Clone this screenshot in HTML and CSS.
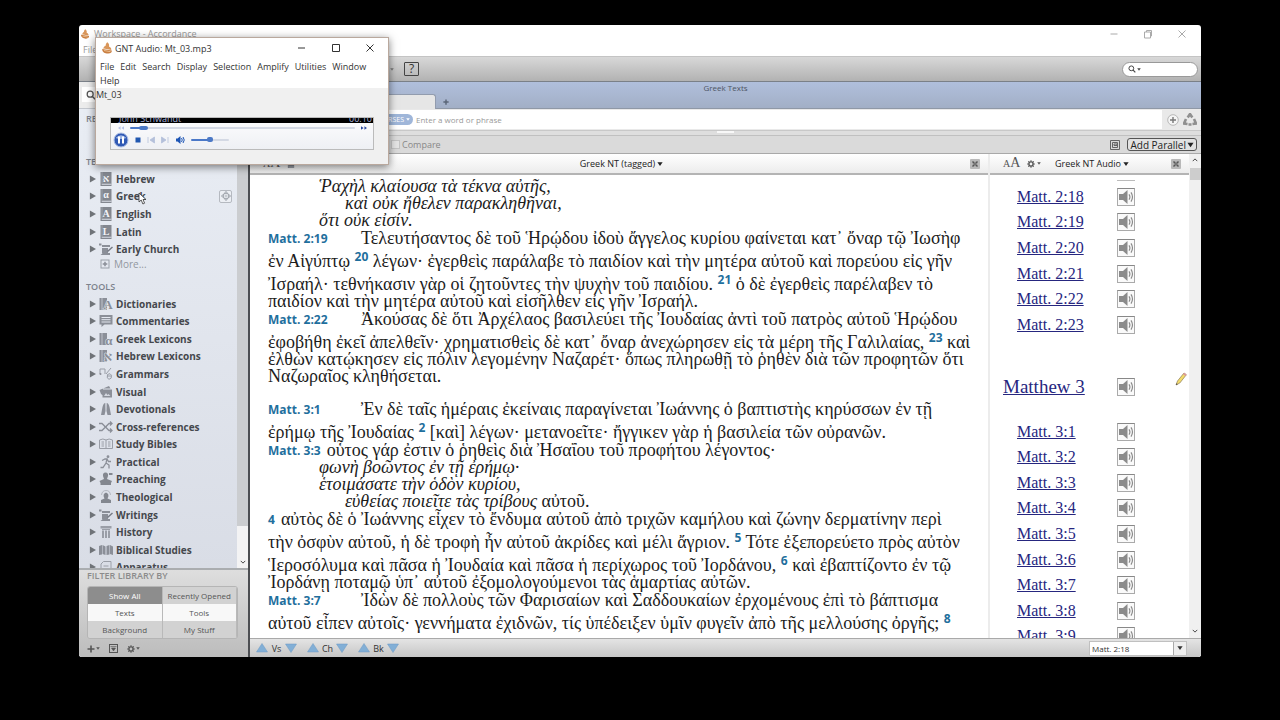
FILE: index.html
```html
<!DOCTYPE html>
<html lang="en">
<head>
<meta charset="utf-8">
<title>Workspace - Accordance</title>
<link rel="stylesheet" href="styles.css">
</head>
<body>
<svg class="defs" aria-hidden="true">
  <symbol id="flame" viewBox="0 0 12 12"><path d="M6.400.3C8 1.700 8.400 3 8 4.400 9.800 5.200 10.600 6.500 10.200 7.900L1.600 6.300C2.800 5.600 3.600 5 3.600 3.800 4.300 4.300 4.700 4 4.700 3.200 4.800 2 5.500 1 6.400.3Z" fill="#d9965a"/><path d="M1.200 7l9.600 1.500c.3 1.800-1.200 3-3.600 3.100C4 11.700 1 10 1.200 7Z" fill="#c97f42"/><path d="M3 8.500l6.500 1.200" stroke="#f3cda0" stroke-width=".8"/></symbol>
  <symbol id="lens" viewBox="0 0 12 12"><circle cx="5" cy="5" r="3.600" fill="none" stroke="currentColor" stroke-width="1.500"/><path d="M7.700 7.700L11 11" stroke="currentColor" stroke-width="1.800"/></symbol>
  <symbol id="gear" viewBox="0 0 10 10"><circle cx="5" cy="5" r="2.600" fill="none" stroke="currentColor" stroke-width="1.700"/><path d="M5 .2v2M5 7.800v2M.2 5h2M7.800 5h2M1.600 1.600L3 3M7 7l1.400 1.400M8.400 1.600L7 3M3 7L1.600 8.400" stroke="currentColor" stroke-width="1.400"/></symbol>
  <symbol id="speaker" viewBox="0 0 16 16"><path d="M1 5h4l4.500-4v14L5 11H1Z" fill="#8b8b8b"/><path d="M11 5.400q1.800 2.600 0 5.200M13 3.400q3 4.600 0 9.200" fill="none" stroke="#8b8b8b" stroke-width="1.200"/></symbol>
  <symbol id="tri" viewBox="0 0 8 8"><path d="M1 0l7 4-7 4Z" fill="#6f7378"/></symbol>
  <symbol id="up" viewBox="0 0 12 10"><path d="M6 .5L11.500 9H.5Z" fill="#82afd6" stroke="#6c9ac5" stroke-width=".5"/></symbol>
  <symbol id="down" viewBox="0 0 12 10"><path d="M6 9.500L11.500 1H.5Z" fill="#82afd6" stroke="#6c9ac5" stroke-width=".5"/></symbol>
  <symbol id="caret" viewBox="0 0 8 6"><path d="M.5.500h7L4 5.700Z" fill="currentColor"/></symbol>
  <symbol id="close" viewBox="0 0 10 10"><rect width="10" height="10" rx="1" fill="#b9b9b9"/><path d="M2.500 2.500l5 5M7.500 2.500l-5 5" stroke="#555" stroke-width="1.500"/><path d="M5 2.500v5M2.500 5h5" stroke="#888" stroke-width=".8"/></symbol>
  <symbol id="scroll" viewBox="0 0 14 14"><path d="M0 1.500h2.500v2H0ZM3 3h8v2H3ZM3 6h6v5.500H3Z" fill="#8b8f98"/><path d="M1.500 13h9.500v-2H4" fill="#8b8f98"/><path d="M8.500 9.500L13.500 5" stroke="#777b84" stroke-width="1.500"/></symbol>
  <symbol id="book" viewBox="0 0 14 14"><path d="M1.500 0h11v14h-11Z" fill="#83878f"/><path d="M2.700 11.700h9.800v1H2.700Z" fill="#d9dde6"/><path d="M3 0v11.500" stroke="#a8acb5" stroke-width=".7"/></symbol>
  <symbol id="books" viewBox="0 0 14 14"><path d="M.5 1h2.200v12H.5ZM3.300 1H8v12H3.300Z" fill="#8b8f98"/></symbol>
  <symbol id="move" viewBox="0 0 12 12"><path d="M6 .5l2.200 2.700H3.800ZM6 11.500l2.200-2.700H3.800ZM.5 6l2.700-2.200v4.400ZM11.500 6L8.800 3.800v4.400Z" fill="#dfe3e9" stroke="#8f959d" stroke-width="1"/><circle cx="6" cy="6" r="1" fill="#9aa0a8"/></symbol>
</svg>
<main class="window">
  <header class="titlebar">
    <div class="title"><svg class="i10"><use href="#flame"/></svg>Workspace - Accordance</div>
    <div class="wincontrols">
      <button aria-label="Minimize"><svg class="i10" viewBox="0 0 10 10"><path d="M1.500 5h7" stroke="#aaa"/></svg></button>
      <button aria-label="Restore"><svg class="i10" viewBox="0 0 10 10"><path d="M1.500 3h6v6h-6ZM3.500 3V1.500h5v5.500H7.500" fill="none" stroke="#aaa"/></svg></button>
      <button aria-label="Close"><svg class="i10" viewBox="0 0 10 10"><path d="M1.500 1.500l7 7M8.500 1.500l-7 7" stroke="#aaa"/></svg></button>
    </div>
    <div class="filemenu">File</div>
  </header>
  <div class="toolbar">
    <div class="toolleft"><svg class="i4 dim"><use href="#caret"/></svg><button class="help">?</button></div>
    <label class="pill"><svg class="i8"><use href="#lens"/></svg><svg class="i4"><use href="#caret"/></svg><input aria-label="Search all"></label>
  </div>
  <div class="body">
    <aside class="sidebar">
      <div class="sidesearch"><label><svg class="i10"><use href="#lens"/></svg><input aria-label="Search library"></label></div>
      <div class="library">
        <div class="tree">
          <h2 class="recent">RECENT</h2>
          <h2>TEXTS</h2>
          <ul class="texts">
            <li><svg class="i8"><use href="#tri"/></svg><svg class="i14"><use href="#book"/><text x="7" y="9.500">א</text></svg>Hebrew</li>
            <li class="greek"><svg class="i8"><use href="#tri"/></svg><svg class="i14"><use href="#book"/><text x="7" y="8.500">α</text></svg>Greek
              <button class="drag" aria-label="Move"><svg class="i10"><use href="#move"/></svg></button>
              <svg class="cursor" viewBox="0 0 9 13"><path d="M1 1v9l2.200-2 1.700 4 1.700-.8L5 7.500h3Z" fill="#fff" stroke="#333" stroke-width=".8"/></svg></li>
            <li><svg class="i8"><use href="#tri"/></svg><svg class="i14"><use href="#book"/><text x="7" y="9.500">A</text></svg>English</li>
            <li><svg class="i8"><use href="#tri"/></svg><svg class="i14"><use href="#book"/><text x="7" y="9.500">L</text></svg>Latin</li>
            <li><svg class="i8"><use href="#tri"/></svg><svg class="i14"><use href="#scroll"/></svg>Early Church</li>
          </ul>
          <div class="more"><svg class="i10" viewBox="0 0 10 10"><rect x="1" y="1" width="8" height="8" fill="none" stroke="#999fa8"/><path d="M5 2.700v4.600M2.700 5h4.600" stroke="#8b8f98" stroke-width="1.500"/></svg>More...</div>
          <h2 class="tools">TOOLS</h2>
          <ul class="toollist">
            <li><svg class="i8"><use href="#tri"/></svg><svg class="i14"><use href="#books"/><text class="dark" x="9" y="12">A</text></svg>Dictionaries</li>
            <li><svg class="i8"><use href="#tri"/></svg><svg class="i14" viewBox="0 0 14 14"><path d="M.5 1h13v9.500H5.500L2.500 13v-2.500h-2Z" fill="#8b8f98"/><path d="M2.500 3.500h9M2.500 5.700h9M2.500 8h9" stroke="#e4e8f0"/></svg>Commentaries</li>
            <li><svg class="i8"><use href="#tri"/></svg><svg class="i14"><use href="#books"/><text class="dark" x="10" y="13">α</text></svg>Greek Lexicons</li>
            <li><svg class="i8"><use href="#tri"/></svg><svg class="i14"><use href="#books"/><text class="dark" x="9" y="12">א</text></svg>Hebrew Lexicons</li>
            <li><svg class="i8"><use href="#tri"/></svg><svg class="i14" viewBox="0 0 14 14"><path d="M1 7V2h5v5M7 7l5-6M8.500 7.500q3-2 4 .8.500 3.700-2.500 4-2.700-.5-1.500-4.800ZM8 9h4.500" fill="none" stroke="#9a9ea7"/><circle cx="1.500" cy="7" r="1" fill="#8b8f98"/></svg>Grammars</li>
            <li><svg class="i8"><use href="#tri"/></svg><svg class="i14" viewBox="0 0 14 14"><path d="M.5 5l9.500-4 1.500 2.500H4v7L2 9ZM3.500 4.500H13v8H3.500Z" fill="#8b8f98"/><path d="M5 11l2-3 1.500 2 1-1 2 2Z" fill="#d4d8e0"/></svg>Visual</li>
            <li><svg class="i8"><use href="#tri"/></svg><svg class="i14" viewBox="0 0 14 14"><path d="M6.300 1Q4.500 1 3.500 5L2 13h3.500l1-4ZM7.700 1q1.800 0 2.800 4L12 13H8.500l-1-4Z" fill="#8b8f98"/></svg>Devotionals</li>
            <li><svg class="i8"><use href="#tri"/></svg><svg class="i14" viewBox="0 0 14 14"><path d="M0 3.500h3l7 7h3M0 10.500h3l7-7h3M11 1.500l2 2-2 2M11 8.500l2 2-2 2" fill="none" stroke="#8b8f98" stroke-width="1.300"/></svg>Cross-references</li>
            <li><svg class="i8"><use href="#tri"/></svg><svg class="i14" viewBox="0 0 14 14"><path d="M.5 3Q4 1 7 3q3-2 6.500 0v8.500H.5ZM7 3v9M2.500 5h2.500M9 5h2.500M2.500 7h2.500M9 7h2.500M2.500 9h2.500M9 9h2.500" fill="none" stroke="#9a9ea7"/></svg>Study Bibles</li>
            <li><svg class="i8"><use href="#tri"/></svg><svg class="i14" viewBox="0 0 14 14"><circle cx="9" cy="1.700" r="1.400" fill="#8b8f98"/><path d="M3 5.500l3-1.500h2l-1 4L4 12.500H1.500M7 8l3 2v3.500M8 4l1.500 2.500H12" fill="none" stroke="#8b8f98" stroke-width="1.300"/></svg>Practical</li>
            <li><svg class="i8"><use href="#tri"/></svg><svg class="i14" viewBox="0 0 14 14"><path d="M6.500.5q3 0 2.500 3.500L8 7l5 2-1 2v2H1.500v-2L.5 9l4.500-2L4 4Q3.500.5 6.500.5ZM10 1h3.500v2H10Z" fill="#83878f"/></svg>Preaching</li>
            <li><svg class="i8"><use href="#tri"/></svg><svg class="i14" viewBox="0 0 14 14"><path d="M2.500 5Q3 .5 7 .5t4.500 4.500" fill="none" stroke="#b4b8c0"/><path d="M7 2.500q4 1.500 1.500 6L12 10v3H2v-3l3.500-1.500Q3 4 7 2.500Z" fill="#83878f"/></svg>Theological</li>
            <li><svg class="i8"><use href="#tri"/></svg><svg class="i14"><use href="#scroll"/></svg>Writings</li>
            <li><svg class="i8"><use href="#tri"/></svg><svg class="i14" viewBox="0 0 14 14"><path d="M1.500 1h11v2.500h-11ZM3 4h8v1H3ZM3 5.500h2V13H3ZM6 5.500h2V13H6ZM9 5.500h2V13H9Z" fill="#9a9ea7"/></svg>History</li>
            <li><svg class="i8"><use href="#tri"/></svg><svg class="i14" viewBox="0 0 14 14"><path d="M0 3l3-1v9.500L0 12ZM3.500 2l3 1.500v8.500l-3-1ZM7.500 3l3-1v9.500l-3 .5ZM11 2l3 1.500V12l-3-1Z" fill="#8b8f98"/></svg>Biblical Studies</li>
            <li><svg class="i8"><use href="#tri"/></svg><svg class="i14" viewBox="0 0 14 14"><path d="M4.500 1.500H12v11H2V4ZM4.500 6h5M4.500 8.500h5" fill="none" stroke="#9a9ea7"/></svg>Apparatus</li>
          </ul>
        </div>
        <div class="sidescroll"><div class="thumb"></div><svg class="i6" viewBox="0 0 8 8"><path d="M1 2.500l3 3 3-3" fill="none" stroke="#444" stroke-width="1.300"/></svg></div>
      </div>
      <footer class="filter">
        <h2>FILTER LIBRARY BY</h2>
        <div class="filters">
          <button class="on">Show All</button><button>Recently Opened</button>
          <button class="lit">Texts</button><button class="lit">Tools</button>
          <button>Background</button><button>My Stuff</button>
        </div>
        <div class="actions">
          <button aria-label="Add"><svg class="i8" viewBox="0 0 8 8"><path d="M4 .5v7M.5 4h7" stroke="#555" stroke-width="1.600"/></svg><svg class="i4"><use href="#caret"/></svg></button>
          <button aria-label="Show"><svg class="i9" viewBox="0 0 9 9"><rect x=".5" y=".5" width="8" height="8" fill="none" stroke="#555"/><path d="M1.500 2.500h6M2.500 4h4L4.500 7Z" fill="#555" stroke="#555" stroke-width=".6"/></svg></button>
          <button aria-label="Options"><svg class="i8"><use href="#gear"/></svg><svg class="i4"><use href="#caret"/></svg></button>
        </div>
      </footer>
    </aside>
    <section class="work">
      <div class="tabs"><div class="caption">Greek Texts</div><div class="tabrow"><div class="tab"></div><button aria-label="New tab"><svg class="i6" viewBox="0 0 8 8"><path d="M4 .5v7M.5 4h7" stroke="#5b6678" stroke-width="2"/></svg></button></div></div>
      <div class="query">
        <div class="field"><button class="verses">VERSES <svg class="i4"><use href="#caret"/></svg></button><input aria-label="Search text" placeholder="Enter a word or phrase"></div>
        <button aria-label="Add row"><svg class="i12" viewBox="0 0 12 12"><circle cx="6" cy="6" r="5.300" fill="#f5f5f5" stroke="#aaa" stroke-width=".8"/><path d="M6 3v6M3 6h6" stroke="#777" stroke-width="1.400"/></svg></button>
        <button aria-label="Recycle"><svg class="i14" viewBox="0 0 14 14"><path d="M4.700 4.500L7 1l2.300 3.500M11 6l2 4.500-3.500.5M3 6l-2 4.500 3.500.5M5.500 11.500h3" fill="none" stroke="#909090" stroke-width="2.600"/></svg></button>
      </div>
      <div class="splitter"><i></i></div>
      <div class="compare">
        <label><input type="checkbox">Compare</label>
        <span class="push"></span>
        <svg class="i10" viewBox="0 0 10 10"><path d="M.5.500h9v9h-9ZM2.500 2.500h5v5h-5ZM4 4h3v1.500H4Z" fill="none" stroke="#666"/></svg>
        <button class="parallel">Add Parallel<svg class="i7"><use href="#caret"/></svg></button>
      </div>
      <div class="panes">
        <article class="pane">
          <header class="panehead"><div class="tune"><span class="aa"><small>A</small>A</span><svg class="i8"><use href="#book"/></svg><svg class="i4"><use href="#caret"/></svg></div><h1>Greek NT (tagged)<svg class="i6"><use href="#caret"/></svg></h1><button class="x" aria-label="Close Greek NT"><svg class="i10"><use href="#close"/></svg></button></header>
          <div class="scripture" lang="grc">
            <p class="q">Ῥαχὴλ κλαίουσα τὰ τέκνα αὐτῆς,</p>
            <p class="q deep">καὶ οὐκ ἤθελεν παρακληθῆναι,</p>
            <p class="q">ὅτι οὐκ εἰσίν.</p>
            <p class="v"><b>Matt. 2:19</b>Τελευτήσαντος δὲ τοῦ Ἡρῴδου ἰδοὺ ἄγγελος κυρίου φαίνεται κατ᾽ ὄναρ τῷ Ἰωσὴφ</p>
            <p class="s">ἐν Αἰγύπτῳ <sup>20</sup> λέγων· ἐγερθεὶς παράλαβε τὸ παιδίον καὶ τὴν μητέρα αὐτοῦ καὶ πορεύου εἰς γῆν</p>
            <p class="s">Ἰσραήλ· τεθνήκασιν γὰρ οἱ ζητοῦντες τὴν ψυχὴν τοῦ παιδίου. <sup>21</sup> ὁ δὲ ἐγερθεὶς παρέλαβεν τὸ</p>
            <p>παιδίον καὶ τὴν μητέρα αὐτοῦ καὶ εἰσῆλθεν εἰς γῆν Ἰσραήλ.</p>
            <p class="v"><b>Matt. 2:22</b>Ἀκούσας δὲ ὅτι Ἀρχέλαος βασιλεύει τῆς Ἰουδαίας ἀντὶ τοῦ πατρὸς αὐτοῦ Ἡρῴδου</p>
            <p class="s">ἐφοβήθη ἐκεῖ ἀπελθεῖν· χρηματισθεὶς δὲ κατ᾽ ὄναρ ἀνεχώρησεν εἰς τὰ μέρη τῆς Γαλιλαίας, <sup>23</sup> καὶ</p>
            <p>ἐλθὼν κατῴκησεν εἰς πόλιν λεγομένην Ναζαρέτ· ὅπως πληρωθῇ τὸ ῥηθὲν διὰ τῶν προφητῶν ὅτι</p>
            <p>Ναζωραῖος κληθήσεται.</p>
            <p class="v chapter"><b>Matt. 3:1</b>Ἐν δὲ ταῖς ἡμέραις ἐκείναις παραγίνεται Ἰωάννης ὁ βαπτιστὴς κηρύσσων ἐν τῇ</p>
            <p class="s">ἐρήμῳ τῆς Ἰουδαίας <sup>2</sup> [καὶ] λέγων· μετανοεῖτε· ἤγγικεν γὰρ ἡ βασιλεία τῶν οὐρανῶν.</p>
            <p class="v tight"><b>Matt. 3:3</b>οὗτος γάρ ἐστιν ὁ ῥηθεὶς διὰ Ἠσαΐου τοῦ προφήτου λέγοντος·</p>
            <p class="q">φωνὴ βοῶντος ἐν τῇ ἐρήμῳ·</p>
            <p class="q">ἑτοιμάσατε τὴν ὁδὸν κυρίου,</p>
            <p class="q deep">εὐθείας ποιεῖτε τὰς τρίβους <span>αὐτοῦ.</span></p>
            <p class="v tight"><b>4</b>αὐτὸς δὲ ὁ Ἰωάννης εἶχεν τὸ ἔνδυμα αὐτοῦ ἀπὸ τριχῶν καμήλου καὶ ζώνην δερματίνην περὶ</p>
            <p class="s">τὴν ὀσφὺν αὐτοῦ, ἡ δὲ τροφὴ ἦν αὐτοῦ ἀκρίδες καὶ μέλι ἄγριον. <sup>5</sup> Τότε ἐξεπορεύετο πρὸς αὐτὸν</p>
            <p class="s">Ἱεροσόλυμα καὶ πᾶσα ἡ Ἰουδαία καὶ πᾶσα ἡ περίχωρος τοῦ Ἰορδάνου, <sup>6</sup> καὶ ἐβαπτίζοντο ἐν τῷ</p>
            <p>Ἰορδάνῃ ποταμῷ ὑπ᾽ αὐτοῦ ἐξομολογούμενοι τὰς ἁμαρτίας αὐτῶν.</p>
            <p class="v"><b>Matt. 3:7</b>Ἰδὼν δὲ πολλοὺς τῶν Φαρισαίων καὶ Σαδδουκαίων ἐρχομένους ἐπὶ τὸ βάπτισμα</p>
            <p class="s">αὐτοῦ εἶπεν αὐτοῖς· γεννήματα ἐχιδνῶν, τίς ὑπέδειξεν ὑμῖν φυγεῖν ἀπὸ τῆς μελλούσης ὀργῆς; <sup>8</sup></p>
          </div>
        </article>
        <article class="audio">
          <header class="panehead"><div class="tune"><span class="aa"><small>A</small>A</span><svg class="i8"><use href="#gear"/></svg><svg class="i4"><use href="#caret"/></svg></div><h1>Greek NT Audio<svg class="i6"><use href="#caret"/></svg></h1><button class="x" aria-label="Close Greek NT Audio"><svg class="i10"><use href="#close"/></svg></button></header>
          <div class="tracks">
            <div class="sliver"></div>
            <ul class="six">
              <li><a href="#">Matt. 2:18</a><button aria-label="Play 2:18"><svg><use href="#speaker"/></svg></button></li>
              <li><a href="#">Matt. 2:19</a><button aria-label="Play 2:19"><svg><use href="#speaker"/></svg></button></li>
              <li><a href="#">Matt. 2:20</a><button aria-label="Play 2:20"><svg><use href="#speaker"/></svg></button></li>
              <li><a href="#">Matt. 2:21</a><button aria-label="Play 2:21"><svg><use href="#speaker"/></svg></button></li>
              <li><a href="#">Matt. 2:22</a><button aria-label="Play 2:22"><svg><use href="#speaker"/></svg></button></li>
              <li><a href="#">Matt. 2:23</a><button aria-label="Play 2:23"><svg><use href="#speaker"/></svg></button></li>
            </ul>
            <div class="book"><a href="#">Matthew 3</a><button aria-label="Play Matthew 3"><svg><use href="#speaker"/></svg></button></div>
            <ul class="nine">
              <li><a href="#">Matt. 3:1</a><button aria-label="Play 3:1"><svg><use href="#speaker"/></svg></button></li>
              <li><a href="#">Matt. 3:2</a><button aria-label="Play 3:2"><svg><use href="#speaker"/></svg></button></li>
              <li><a href="#">Matt. 3:3</a><button aria-label="Play 3:3"><svg><use href="#speaker"/></svg></button></li>
              <li><a href="#">Matt. 3:4</a><button aria-label="Play 3:4"><svg><use href="#speaker"/></svg></button></li>
              <li><a href="#">Matt. 3:5</a><button aria-label="Play 3:5"><svg><use href="#speaker"/></svg></button></li>
              <li><a href="#">Matt. 3:6</a><button aria-label="Play 3:6"><svg><use href="#speaker"/></svg></button></li>
              <li><a href="#">Matt. 3:7</a><button aria-label="Play 3:7"><svg><use href="#speaker"/></svg></button></li>
              <li><a href="#">Matt. 3:8</a><button aria-label="Play 3:8"><svg><use href="#speaker"/></svg></button></li>
              <li><a href="#">Matt. 3:9</a><button aria-label="Play 3:9"><svg><use href="#speaker"/></svg></button></li>
            </ul>
            <svg class="pencil" viewBox="0 0 12 14"><path d="M1 13l1.500-4L9 1l2.300 1.800L4.800 11Z" fill="#f3dc6a" stroke="#8d7a55" stroke-width=".7"/><path d="M8 2.200L9.300.7l2.300 1.800-1.300 1.600Z" fill="#dc9a9a"/><path d="M1 13l.6-1.800 1.200 1Z" fill="#444"/></svg>
          </div>
        </article>
        <div class="vscroll"><svg class="i6" viewBox="0 0 8 8"><path d="M1 5.500l3-3 3 3" fill="none" stroke="#444" stroke-width="1.300"/></svg><div class="thumb"></div><svg class="i6 end" viewBox="0 0 8 8"><path d="M1 2.500l3 3 3-3" fill="none" stroke="#444" stroke-width="1.300"/></svg></div>
      </div>
      <footer class="status">
        <span class="nav"><button aria-label="Previous verse"><svg><use href="#up"/></svg></button>Vs<button aria-label="Next verse"><svg><use href="#down"/></svg></button></span>
        <span class="nav"><button aria-label="Previous chapter"><svg><use href="#up"/></svg></button>Ch<button aria-label="Next chapter"><svg><use href="#down"/></svg></button></span>
        <span class="nav"><button aria-label="Previous book"><svg><use href="#up"/></svg></button>Bk<button aria-label="Next book"><svg><use href="#down"/></svg></button></span>
        <span class="push"></span>
        <div class="combo"><input aria-label="Reference" value="Matt. 2:18"><button aria-label="Open list"><svg class="i6"><use href="#caret"/></svg></button></div>
      </footer>
    </section>
  </div>
  <section class="dialog" aria-label="GNT Audio">
    <header><svg class="i12"><use href="#flame"/></svg><span>GNT Audio: Mt_03.mp3</span>
      <div class="dlgcontrols">
        <button aria-label="Minimize"><svg class="i10" viewBox="0 0 10 10"><path d="M1 5h7" stroke="#333"/></svg></button>
        <button aria-label="Maximize"><svg class="i10" viewBox="0 0 10 10"><path d="M1.500 1.500h7v7h-7Z" fill="none" stroke="#333"/></svg></button>
        <button aria-label="Close"><svg class="i10" viewBox="0 0 10 10"><path d="M1.500 1.500l7 7M8.500 1.500l-7 7" stroke="#333"/></svg></button>
      </div>
    </header>
    <nav><span>File</span><span>Edit</span><span>Search</span><span>Display</span><span>Selection</span><span>Amplify</span><span>Utilities</span><span>Window</span><span>Help</span></nav>
    <div class="dlgbody">
      <div class="track">Mt_03</div>
      <div class="player">
        <div class="marquee"><span>John Schwandt</span><span>00:10</span></div>
        <div class="seek"><svg viewBox="0 0 7 4"><path d="M3 0v4L0 2ZM7 0v4L4 2Z" fill="#b7c3e6"/></svg><input type="range" aria-label="Position" min="0" max="100" value="4"><svg viewBox="0 0 7 4"><path d="M0 0v4l3-2ZM4 0v4l3-2Z" fill="#2a4aa0"/></svg></div>
        <div class="transport">
          <button aria-label="Pause"><svg class="i16" viewBox="0 0 16 16"><circle cx="8" cy="8" r="7" fill="#3059b4" stroke="#aebfe4"/><path d="M2.500 6Q8 .5 13.500 6 8 8 2.500 6Z" fill="#9eb6e6"/><path d="M6 4.500v7M10 4.500v7" stroke="#fff" stroke-width="2"/></svg></button>
          <button aria-label="Stop"><svg class="i6" viewBox="0 0 6 6"><path d="M.5.500h5v5h-5Z" fill="#2057b0"/></svg></button>
          <button aria-label="Previous"><svg class="i8" viewBox="0 0 8 8"><path d="M1 1v6M7.500 1v6L3 4Z" fill="#b4c0da" stroke="#b4c0da" stroke-width=".8"/></svg></button>
          <button aria-label="Next"><svg class="i8" viewBox="0 0 8 8"><path d="M7 1v6M.5 1v6L5 4Z" fill="#b4c0da" stroke="#b4c0da" stroke-width=".8"/></svg></button>
          <button aria-label="Mute"><svg class="i10" viewBox="0 0 10 10"><path d="M1 3.500h1.500L5.500 1v8L2.500 6.500H1Z" fill="#1d55b5"/><path d="M6.500 3q1.500 2 0 4M8 2q2.500 3 0 6" fill="none" stroke="#1d55b5"/></svg></button>
          <input type="range" aria-label="Volume" min="0" max="100" value="50">
        </div>
      </div>
    </div>
  </section>
</main>
</body>
</html>
```

FILE: styles.css
```css
* { box-sizing: border-box; }
body { margin: 0; height: 100vh; padding: 25px 79px 63px; background: #000; font: 9px "Open Sans", "Noto Sans", sans-serif; color: #333; }
button, input { font: inherit; color: inherit; margin: 0; padding: 0; border: 0; background: none; min-width: 0; outline: 0; }
button { display: inline-flex; align-items: center; justify-content: center; }
h1, h2, p, ul { margin: 0; padding: 0; font-weight: 400; font-size: inherit; list-style: none; }
svg { flex: none; display: block; }
.defs { position: absolute; width: 0; height: 0; }
.i4 { width: 4px; height: 3px; }
.i6 { width: 6px; height: 6px; }
.i7 { width: 7px; height: 6px; }
.i8 { width: 8px; height: 8px; }
.i9 { width: 9px; height: 9px; }
.i10 { width: 10px; height: 10px; }
.i12 { width: 12px; height: 12px; }
.i14 { width: 14px; height: 14px; }
.i16 { width: 16px; height: 16px; }
.push { flex: 1; }

.window { position: relative; height: 100%; display: flex; flex-direction: column; background: #fff; border-radius: 3px; overflow: hidden; }
.titlebar { flex: none; height: 31px; display: grid; grid-template-columns: 1fr auto; grid-template-rows: 17px 14px; align-items: center; color: #999; padding-left: 1px; }
.title { display: flex; align-items: center; gap: 4px; }
.filemenu { padding-left: 3px; }
.wincontrols { display: flex; gap: 24px; padding-right: 14px; }
.toolbar { flex: none; height: 26px; display: flex; align-items: center; justify-content: space-between; padding: 0 3px 0 311px; background: linear-gradient(#d8d8d8, #b2b2b2); border-top: 1px solid #c4c4c4; border-bottom: 1px solid #7a8088; }
.toolleft { display: flex; align-items: center; gap: 10px; }
.dim { color: #777; }
.help { width: 15px; height: 14px; border: 1px solid #444; border-radius: 1px; font-size: 12px; line-height: 12px; }
.pill { display: flex; align-items: center; gap: 1px; width: 76px; height: 15px; padding: 0 5px; border: 1px solid #999; border-radius: 8px; background: #fff; color: #444; }
.pill input { width: 40px; }

.body { flex: 1; min-height: 0; display: flex; }
.sidebar { flex: none; width: 171px; display: flex; flex-direction: column; border-right: 2px solid #4c4e52; background: #e4e8f0; }
.sidesearch { flex: none; height: 27px; padding: 5px 3px; background: #ececec; border-bottom: 1px solid #c3c7ce; }
.sidesearch label { display: flex; height: 15px; align-items: center; padding-left: 4px; background: #fff; color: #555; }
.library { flex: 1; min-height: 0; display: flex; overflow: hidden; background: linear-gradient(#e9edf4, #d9dde6); }
.tree { flex: 1; min-width: 0; padding-left: 7px; font-size: 10px; color: #45484d; }
.sidebar h2 { font-size: 9px; font-weight: 600; line-height: 12px; color: #7c828c; }
.tree .recent { margin: 4px 0 31px; }
.texts { display: grid; grid-auto-rows: 1fr; height: 88px; margin-top: 2px; }
.toollist { display: grid; grid-auto-rows: 1fr; height: 281px; margin-top: 2px; }
.tree li { display: flex; align-items: center; gap: 3px; white-space: nowrap; font-weight: 700; line-height: 16px; position: relative; padding-left: 3px; }
.tree li > .i8 { width: 7px; }
.tree svg text { font: 700 10px "Liberation Serif", "DejaVu Serif", serif; fill: #f2f4f8; text-anchor: middle; }
.tree svg .dark { fill: #8b8f98; font-size: 13px; stroke: #e4e8f0; stroke-width: 1px; paint-order: stroke; }
.drag { width: 13px; height: 13px; margin-left: auto; margin-right: 5px; border: 1px solid #b5b9c0; border-radius: 2px; background: #eceff4; }
.cursor { position: absolute; left: 52px; top: 4px; width: 9px; height: 13px; }
.more { display: flex; align-items: center; gap: 4px; height: 12px; padding-left: 14px; font-size: 10px; color: #9297a0; }
.tree .tools { margin-top: 11px; }
.sidescroll { width: 11px; background: #f3f3f4; display: flex; flex-direction: column; align-items: center; justify-content: space-between; padding-bottom: 3px; }
.sidescroll .thumb { width: 11px; height: 417px; background: #cbcdd0; }
.filter { flex: none; height: 89px; padding: 0 10px 0 8px; border-top: 2px solid #aaadb0; background: linear-gradient(#dedede, #bcbcbc); }
.sidebar .filter h2 { color: #8b8b8b; }
.filters { display: grid; grid-template-columns: 1fr 1fr; grid-auto-rows: 17px; margin-top: 4px; border: 1px solid #b5b5b5; border-radius: 3px; overflow: hidden; color: #555; font-size: 8px; }
.filters button { background: #d2d2d2; border-right: 1px solid #b9b9b9; white-space: nowrap; }
.filters .on { background: #8d8d8d; color: #fff; }
.filters .lit { background: #f8f8f8; }
.actions { display: flex; align-items: center; gap: 9px; padding: 5px 0 0; color: #555; }
.actions button { gap: 1px; }

.work { flex: 1; min-width: 0; display: flex; flex-direction: column; background: #fff; }
.tabs { flex: none; height: 27px; background: linear-gradient(#b0bfdc, #a2afc6); border-bottom: 1px solid #8f98a6; display: flex; flex-direction: column; justify-content: space-between; }
.caption { text-align: center; font-size: 8px; line-height: 12px; color: #4d5564; }
.tabrow { display: flex; align-items: center; gap: 7px; height: 15px; }
.tab { width: 186px; height: 15px; background: #e6e6e6; border: 1px solid #929cae; border-bottom: 0; border-radius: 3px 3px 0 0; }
.query { flex: none; display: flex; align-items: center; gap: 3px; height: 21px; padding-right: 4px; background: #e9e9e9; }
.query > button { width: 14px; }
.field { flex: 1; height: 19px; margin-right: 1px; display: flex; align-items: center; gap: 3px; padding-left: 122px; background: #fff; }
.field input { flex: 1; font-size: 8px; }
.field input::placeholder { color: #999; opacity: 1; }
.verses { width: 41px; height: 11px; gap: 2px; border-radius: 6px; background: #9fb6d9; color: #fff; font-size: 7px; line-height: 11px; justify-content: flex-end; padding-right: 3px; }
.splitter { flex: none; height: 5px; background: #dedede; border-top: 1px solid #c8c8c8; display: flex; justify-content: center; }
.splitter i { width: 17px; height: 2px; background: #f8f8f8; }
.compare { flex: none; height: 19px; display: flex; align-items: center; gap: 7px; padding: 0 4px 0 141px; background: #dadada; border-top: 1px solid #c0c0c0; border-bottom: 1px solid #a9a9a9; color: #888; }
.compare label { display: flex; align-items: center; gap: 2px; }
.compare input { appearance: none; width: 9px; height: 9px; border: 1px solid #c4c4c4; background: #e4e4e4; }
.parallel { height: 13px; gap: 1px; padding: 0 2px; border: 1px solid #555; border-radius: 3px; background: #e2e2e2; color: #222; font-size: 10px; white-space: nowrap; }

.panes { flex: 1; min-height: 0; display: flex; }
.pane { flex: 1; min-width: 0; display: flex; flex-direction: column; overflow: hidden; }
.audio { flex: none; width: 201px; border-left: 2px solid #ececec; display: flex; flex-direction: column; overflow: hidden; }
.panehead { flex: none; height: 21px; display: grid; grid-template-columns: 1fr auto 1fr; align-items: center; padding: 0 8px 0 13px; background: linear-gradient(#fff, #ececec); border-bottom: 2px solid #b4b4b4; color: #555; }
.tune { display: flex; align-items: center; gap: 2px; }
.panehead h1 { display: flex; align-items: center; gap: 2px; color: #222; }
.x { justify-self: end; }
.aa { font: 14px "Liberation Serif", serif; margin-right: 5px; line-height: 16px; }
.aa small { font-size: 10px; }
.scripture { flex: 1; min-height: 0; overflow: hidden; padding: 3px 0 0 18px; font-family: "Liberation Serif", "DejaVu Serif", serif; font-size: 18px; color: #1c1c1c; white-space: nowrap; }
.scripture p { line-height: 17px; }
.scripture .q { padding-left: 51px; font-style: italic; }
.scripture .deep { padding-left: 77px; }
.scripture .q span { font-style: normal; }
.scripture .v { line-height: 18px; }
.scripture .s { padding-top: 5px; line-height: 18px; }
.scripture .chapter { margin-top: 15px; }
.scripture b, .scripture sup { font-family: "Open Sans", sans-serif; font-size: 12px; font-weight: 700; color: #1f6f9d; line-height: 12px; }
.scripture sup { vertical-align: 6px; line-height: 0; }
.scripture b { display: inline-block; min-width: 93px; vertical-align: 1px; }
.scripture .tight b { min-width: 0; margin-right: 6px; }

.tracks { flex: 1; min-height: 0; position: relative; overflow: hidden; font-family: "Liberation Serif", serif; font-size: 16px; }
.tracks li, .book { display: grid; grid-template-columns: 100px 18px; align-items: center; padding-left: 27px; }
.tracks a { color: #26267f; }
.tracks button { width: 18px; height: 18px; border: 1px solid #aaa; border-top-color: #888; background: #fafafa; }
.tracks button svg { width: 16px; height: 16px; }
.sliver { width: 18px; height: 6px; margin-left: 127px; border-bottom: 1px solid #bbb; }
.tracks ul { display: grid; grid-auto-rows: 1fr; }
.six { height: 154px; margin-top: 3px; }
.nine { height: 230px; margin-top: 12px; }
.book { height: 41px; margin-top: 28px; padding-left: 13px; grid-template-columns: 114px 18px; font-size: 19px; }
.pencil { position: absolute; right: 2px; top: 197px; width: 12px; height: 14px; }
.vscroll { flex: none; width: 12px; display: flex; flex-direction: column; align-items: center; gap: 5px; padding: 3px 0 4px; background: #f0f0f0; }
.vscroll .thumb { width: 11px; height: 12px; background: #cdcdcd; }
.vscroll .end { margin-top: auto; }

.status { flex: none; height: 19px; display: flex; align-items: center; gap: 10px; padding: 0 14px 0 6px; background: linear-gradient(#e4e4e4, #c6c6c6); border-top: 1px solid #a9a9a9; }
.nav { display: flex; align-items: center; justify-content: space-between; width: 41px; }
.nav svg { width: 12px; height: 10px; }
.combo { display: flex; width: 98px; height: 15px; background: #fff; border: 1px solid #c0c0c0; }
.combo input { flex: 1; padding-left: 2px; font-size: 8px; }
.combo button { width: 13px; border-left: 1px solid #aaa; background: #eee; }

.dialog { position: absolute; left: 16px; top: 12px; width: 294px; height: 128px; display: flex; flex-direction: column; background: #fff; border: 1px solid #b9a89d; box-shadow: 0 2px 8px rgba(0, 0, 0, .5); color: #333; }
.dialog header { height: 20px; display: flex; align-items: center; gap: 2px; padding: 0 13px 0 5px; }
.dlgcontrols { flex: 1; display: flex; justify-content: flex-end; gap: 24px; }
.dialog nav { display: flex; flex-wrap: wrap; column-gap: 6px; padding: 2px 4px 0; line-height: 14px; height: 30px; }
.dialog nav :last-child { flex-basis: 100%; }
.dlgbody { flex: 1; background: #f0f0f0; }
.track { height: 29px; line-height: 14px; }
.player { width: 264px; height: 33px; margin-left: 14px; border: 1px solid #bbb; background: linear-gradient(#fdfdfe, #eef0f4); display: flex; flex-direction: column; }
.marquee { flex: none; height: 5px; display: flex; align-items: flex-end; justify-content: space-between; overflow: hidden; padding: 0 1px 0 8px; background: #000; color: #a9b5dd; line-height: 8px; }
.seek { display: flex; align-items: center; gap: 6px; height: 9px; padding: 0 6px 0 7px; }
.seek svg { width: 6px; height: 4px; }
.seek input { flex: 1; }
.player input { appearance: none; height: 2px; border-radius: 2px; background: linear-gradient(90deg, #4a78c8 6%, #d4d9e4 6%); }
.player input::-webkit-slider-thumb { appearance: none; width: 9px; height: 4px; border-radius: 2px; background: #4c79c6; }
.transport { display: flex; align-items: center; gap: 6px; padding-left: 2px; height: 15px; }
.transport input { width: 38px; background: linear-gradient(90deg, #4a78c8 50%, #d4d9e4 50%); }
.transport input::-webkit-slider-thumb { width: 6px; height: 5px; }
```
